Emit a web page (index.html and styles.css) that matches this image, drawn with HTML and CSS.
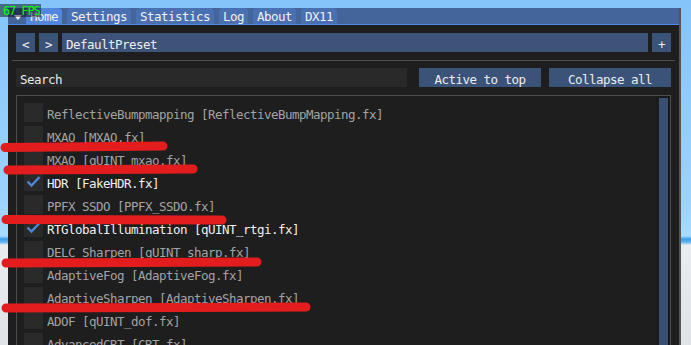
FILE: index.html
```html
<!DOCTYPE html>
<html>
<head>
<meta charset="utf-8">
<link rel="stylesheet" href="styles.css">
</head>
<body>
<div class="window">
  <div class="tabbar">
    <span class="collapse"></span>
    <div class="tab active">Home</div>
    <div class="tab">Settings</div>
    <div class="tab">Statistics</div>
    <div class="tab">Log</div>
    <div class="tab">About</div>
    <div class="tab">DX11</div>
  </div>
  <div class="content">
    <div class="row">
      <div class="btn sq">&lt;</div>
      <div class="btn sq">&gt;</div>
      <div class="field">DefaultPreset</div>
      <div class="btn sq">+</div>
    </div>
    <div class="sep"></div>
    <div class="row">
      <div class="input">Search</div>
      <div class="btn wide">Active to top</div>
      <div class="btn wide">Collapse all</div>
    </div>
    <div class="list">
      <div class="items">
        <div class="item"><span class="cb"></span><span class="label">ReflectiveBumpmapping [ReflectiveBumpMapping.fx]</span></div>
        <div class="item"><span class="cb"></span><span class="label">MXAO [MXAO.fx]</span></div>
        <div class="item"><span class="cb"></span><span class="label">MXAO [qUINT_mxao.fx]</span></div>
        <div class="item on"><span class="cb"><svg viewBox="0 0 19 19" class="check"><polyline points="3.5,9.5 7.5,13.5 15.5,5"/></svg></span><span class="label">HDR [FakeHDR.fx]</span></div>
        <div class="item"><span class="cb"></span><span class="label">PPFX SSDO [PPFX_SSDO.fx]</span></div>
        <div class="item on"><span class="cb"><svg viewBox="0 0 19 19" class="check"><polyline points="3.5,9.5 7.5,13.5 15.5,5"/></svg></span><span class="label">RTGlobalIllumination [qUINT_rtgi.fx]</span></div>
        <div class="item"><span class="cb"></span><span class="label">DELC_Sharpen [qUINT_sharp.fx]</span></div>
        <div class="item"><span class="cb"></span><span class="label">AdaptiveFog [AdaptiveFog.fx]</span></div>
        <div class="item"><span class="cb"></span><span class="label">AdaptiveSharpen [AdaptiveSharpen.fx]</span></div>
        <div class="item"><span class="cb"></span><span class="label">ADOF [qUINT_dof.fx]</span></div>
        <div class="item"><span class="cb"></span><span class="label">AdvancedCRT [CRT.fx]</span></div>
      </div>
      <div class="scroll"><div class="grab"></div></div>
    </div>
  </div>
</div>
<div class="fps">67 FPS</div>
<svg class="marks" viewBox="0 0 691 345" width="691" height="345">
  <line x1="5" y1="147.5" x2="163" y2="146"/>
  <line x1="8" y1="170" x2="193" y2="169"/>
  <line x1="6" y1="219.5" x2="222" y2="220"/>
  <line x1="6" y1="263" x2="257" y2="262"/>
  <line x1="6" y1="308" x2="306" y2="307"/>
</svg>
</body>
</html>
```
FILE: styles.css
```css
html, body {
  margin: 0;
  padding: 0;
  width: 691px;
  height: 345px;
  overflow: hidden;
}
body {
  background: linear-gradient(to bottom, #84c4fa 0, #9cd3fd 200px, #a8dcfe 236px, #3c9ee8 239px, #5db3f1 242px, #e9edf1 245px, #dfe3e8 345px);
  font-family: "DejaVu Sans Mono", "Liberation Mono", monospace;
  font-size: 12.5px;
  letter-spacing: -0.525px;
  color: #e6e6e6;
  position: relative;
}
.window {
  margin: 8px 0 0 8px;
  width: 671px;
  height: 337px;
  border-right: 2px solid #555555;
  background: #1e1e1e;
  display: flex;
  flex-direction: column;
}
.tabbar {
  height: 18px;
  background: #44659b;
  border-bottom: 1px solid #4f88e6;
  display: flex;
  align-items: flex-end;
  gap: 5px;
  padding-left: 6px;
}
.collapse {
  width: 0;
  height: 0;
  border-left: 4px solid transparent;
  border-right: 4px solid transparent;
  border-top: 5px solid #ffffff;
  margin-bottom: 4px;
  margin-right: -1px;
}
.tab {
  box-sizing: border-box;
  height: 16px;
  line-height: 16px;
  padding: 1px 4px 0;
  background: #4970b0;
  border-radius: 4px 4px 0 0;
  color: #f2f2f2;
}
.tab.active {
  background: #5287de;
}
.content {
  padding: 8px;
  display: flex;
  flex-direction: column;
}
.row {
  display: flex;
  height: 19px;
  gap: 4px;
}
.btn, .field, .row .input {
  box-sizing: border-box;
  height: 19px;
  padding-top: 2px;
  line-height: 19px;
}
.btn {
  background: #3c5379;
  color: #eeeeee;
  text-align: center;
}
.sq {
  width: 19px;
}
.field {
  flex: 1;
  background: #3d5379;
  padding-left: 4px;
  padding-right: 4px;
  color: #eeeeee;
}
.sep {
  height: 1px;
  background: #4c4c4c;
  margin: 8px -4px 7px;
}
.row .input {
  flex: 1;
  background: #292929;
  padding-left: 4px;
  padding-right: 4px;
  color: #e8e8e8;
  margin-right: 4px;
}
.wide {
  width: 122px;
  margin-left: 4px;
}
.list {
  margin-top: 8px;
  border: 1px solid #4d4d4d;
  display: flex;
  height: 260px;
}
.items {
  flex: 1;
  padding: 7px 0 0 7px;
  display: flex;
  flex-direction: column;
  gap: 4px;
}
.item {
  display: flex;
  align-items: flex-start;
  gap: 4px;
  height: 19px;
}
.cb {
  width: 19px;
  height: 19px;
  background: #2a2a2a;
  display: block;
}
.check {
  width: 19px;
  height: 19px;
  display: block;
}
.check polyline {
  fill: none;
  stroke: #4f86d8;
  stroke-width: 2.4;
}
.label {
  color: #a3a3a3;
  line-height: 19px;
  padding-top: 2px;
  white-space: nowrap;
}
.item.on .label {
  color: #f0f0f0;
}
.scroll {
  width: 14px;
  background: #1a1a1a;
  padding: 2px 2px 0 3px;
  box-sizing: border-box;
}
.grab {
  background: #3a4f74;
  height: 100%;
}
.fps {
  position: absolute;
  left: 0;
  top: 4px;
  width: 38px;
  height: 13px;
  padding-left: 3px;
  background: rgba(0, 0, 0, 0.46);
  color: #00ff00;
  font-size: 12px;
  letter-spacing: -1.1px;
  line-height: 14px;
  white-space: nowrap;
}
.marks {
  position: absolute;
  left: 0;
  top: 0;
  pointer-events: none;
}
.marks line {
  stroke: #e31d1d;
  stroke-width: 9;
  stroke-linecap: round;
}
```
